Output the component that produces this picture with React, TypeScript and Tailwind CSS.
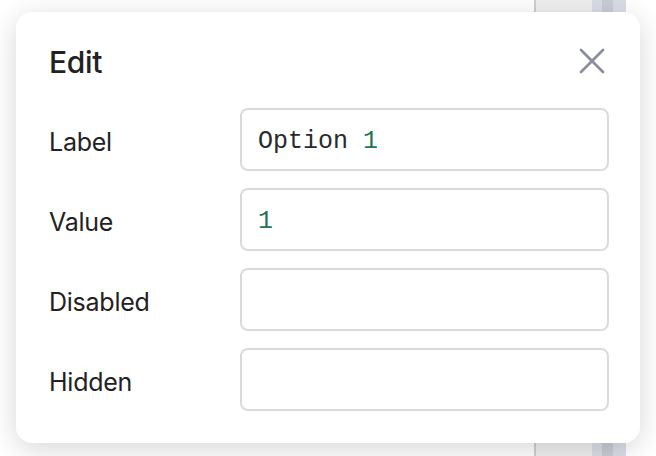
import { X } from 'lucide-react';

const FIELDS = [
  { label: 'Label', value: 'Option', num: '1' },
  { label: 'Value', value: '', num: '1' },
  { label: 'Disabled', value: '', num: '' },
  { label: 'Hidden', value: '', num: '' }
];

export default function App() {
  return (
    <div className="relative w-[656px] h-[456px] overflow-hidden bg-white font-['Inter',sans-serif]">
      {/* page behind the dialog */}
      <div className="flex h-full">
        <div className="flex-1" />
        <div className="w-[2px] bg-[#cfcfcf]" />
        <div className="w-[56px] bg-[#efefef]" />
        <div className="flex w-[34px]">
          <div className="w-[10px] bg-[#dadde5]" />
          <div className="w-[11px] bg-[#c9ccd4]" />
          <div className="w-[13px] bg-[#dadde5]" />
        </div>
        <div className="w-[30px]" />
      </div>

      <div className="absolute left-[16px] top-[12px] w-[624px] h-[431px] rounded-[16px] bg-white shadow-[0_6px_28px_rgba(0,0,0,0.16)] pl-[33px] pr-[31px] pt-[29px] pb-[32px]">
        <div className="flex items-center justify-between h-[40px]">
          <h2 className="text-[30px] font-medium text-[#222] tracking-[-0.01em] pt-[2px]">Edit</h2>
          <button className="text-[#8a8e9c] -mr-[5px]">
            <X size={44} strokeWidth={1.45} />
          </button>
        </div>

        <div className="mt-[27px] flex flex-col gap-[17px]">
          {FIELDS.map((f) => (
            <div key={f.label} className="flex items-center">
              <span className="w-[191px] text-[25px] text-[#222] tracking-[-0.01em] pt-[7px]">{f.label}</span>
              <div className="flex-1 h-[63px] rounded-[8px] border-2 border-[#d8dadf] flex items-center px-[16px] pt-[5px] font-['Liberation_Mono',monospace] text-[25px] text-[#2a2a2a]">
                {f.value && <span>{f.value}&nbsp;</span>}
                {f.num && <span className="text-[#1f7556]">{f.num}</span>}
              </div>
            </div>
          ))}
        </div>
      </div>
    </div>
  );
}
